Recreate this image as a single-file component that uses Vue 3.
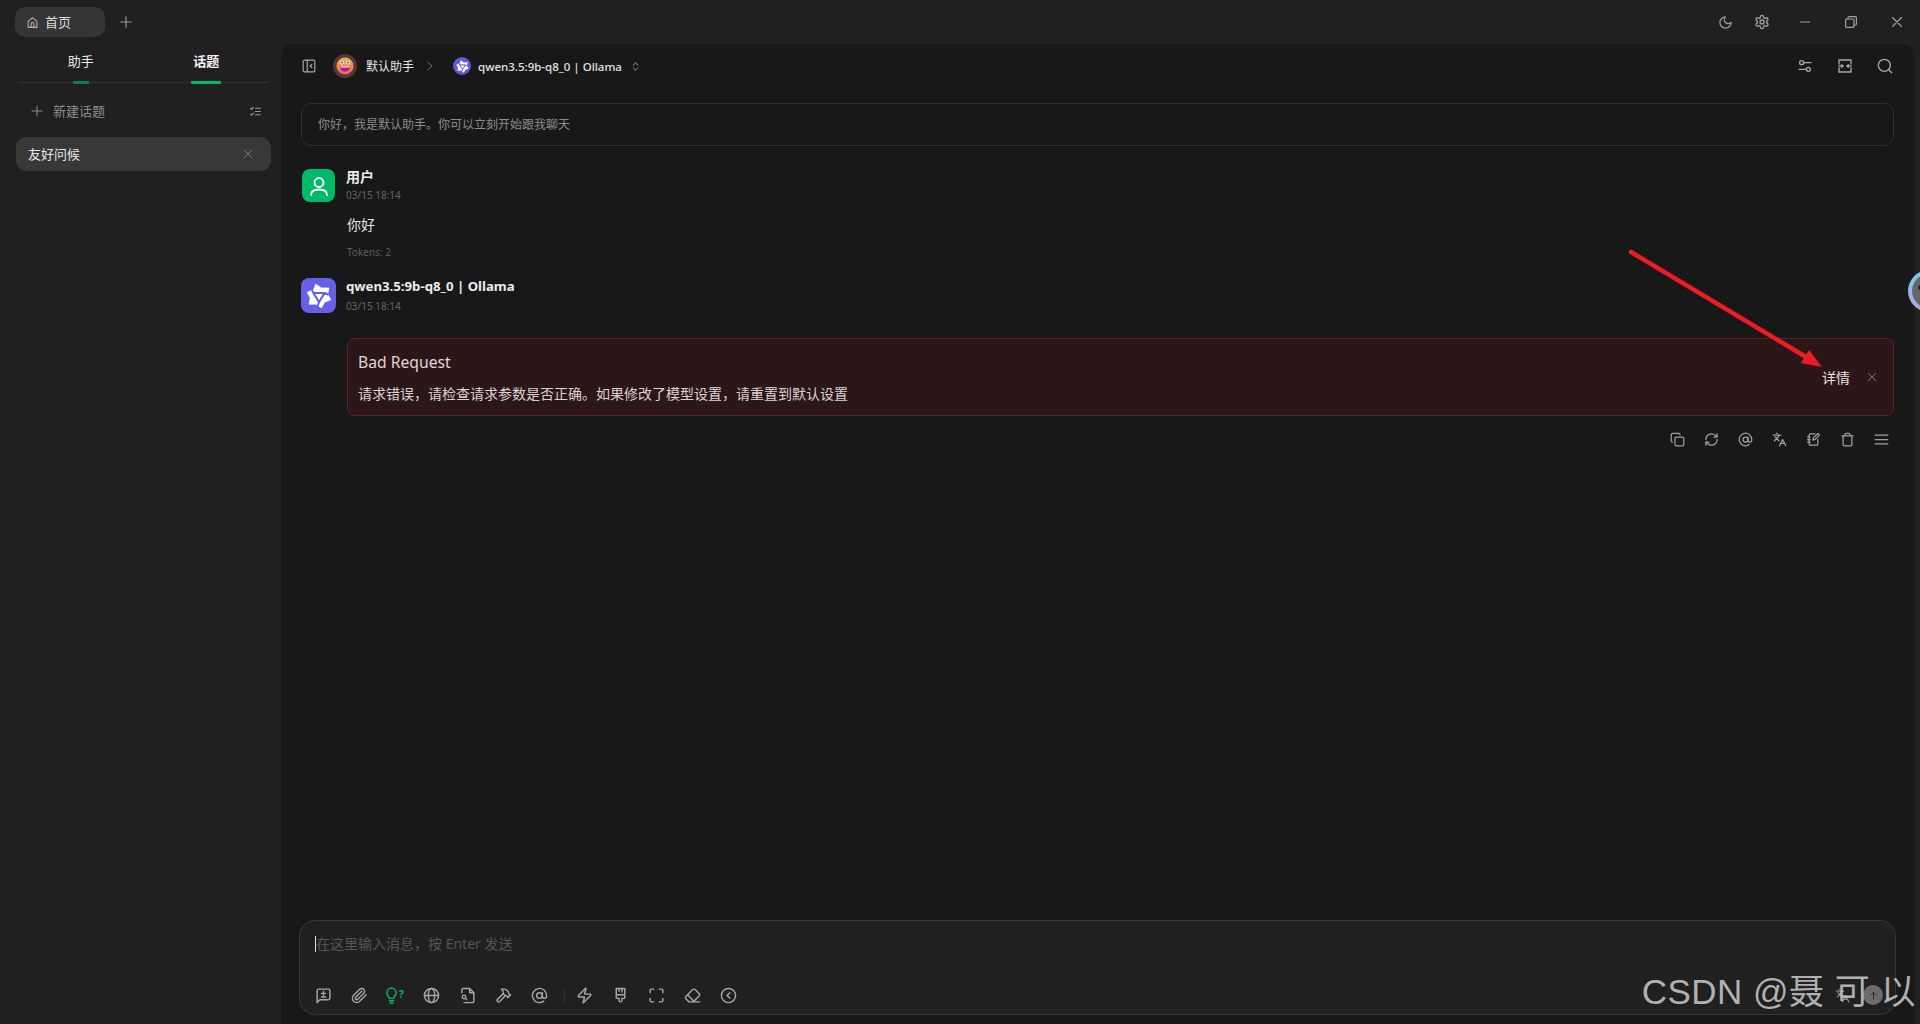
<template>
  <div class="app">
    <!-- 顶部标签栏 -->
    <header class="titlebar">
      <div class="tabs">
        <div class="tab">
          <svg class="home" viewBox="0 0 24 24"><path d="M4 21V10l8-7 8 7v11z" /><path d="M9.5 21v-7a2.5 2.5 0 0 1 5 0v7" /></svg>
          <span>首页</span>
        </div>
        <svg class="add" viewBox="0 0 24 24"><path d="M12 3v18M3 12h18" /></svg>
      </div>
      <div class="win">
        <svg class="moon" viewBox="0 0 24 24"><path d="M12 3a6 6 0 0 0 9 9 9 9 0 1 1-9-9Z" /></svg>
        <svg class="gear" viewBox="0 0 24 24"><path d="M12.22 2h-.44a2 2 0 0 0-2 2v.18a2 2 0 0 1-1 1.73l-.43.25a2 2 0 0 1-2 0l-.15-.08a2 2 0 0 0-2.73.73l-.22.38a2 2 0 0 0 .73 2.73l.15.1a2 2 0 0 1 1 1.72v.51a2 2 0 0 1-1 1.74l-.15.09a2 2 0 0 0-.73 2.73l.22.38a2 2 0 0 0 2.73.73l.15-.08a2 2 0 0 1 2 0l.43.25a2 2 0 0 1 1 1.73V20a2 2 0 0 0 2 2h.44a2 2 0 0 0 2-2v-.18a2 2 0 0 1 1-1.73l.43-.25a2 2 0 0 1 2 0l.15.08a2 2 0 0 0 2.73-.73l.22-.39a2 2 0 0 0-.73-2.73l-.15-.08a2 2 0 0 1-1-1.74v-.5a2 2 0 0 1 1-1.74l.15-.09a2 2 0 0 0 .73-2.73l-.22-.38a2 2 0 0 0-2.73-.73l-.15.08a2 2 0 0 1-2 0l-.43-.25a2 2 0 0 1-1-1.73V4a2 2 0 0 0-2-2z" /><circle cx="12" cy="12" r="3" /></svg>
        <svg class="min" viewBox="0 0 10 10"><path d="M0 5h10" /></svg>
        <svg class="max" viewBox="0 0 12 12"><rect x="0.6" y="3" width="8.4" height="8.4" rx="1" /><path d="M3 3V1.6a1 1 0 0 1 1-1h6.4a1 1 0 0 1 1 1V8a1 1 0 0 1-1 1H9" /></svg>
        <svg class="close" viewBox="0 0 10 10"><path d="M0.5 0.5l9 9M9.5 0.5l-9 9" /></svg>
      </div>
    </header>

    <div class="body">
      <!-- 左侧话题栏 -->
      <aside class="sidebar">
        <div class="side-tabs">
          <div class="side-tab">助手<i class="bar dim"></i></div>
          <div class="side-tab on">话题<i class="bar"></i></div>
        </div>
        <div class="new-topic">
          <svg class="plus" viewBox="0 0 24 24"><path d="M12 2v20M2 12h20" /></svg>
          <span>新建话题</span>
          <svg class="check" viewBox="0 0 24 24"><path d="M3 6l2 2 3-4M3 17l2 2 3-4M12 6h9M12 12h9M12 18h9" /></svg>
        </div>
        <div class="topic">
          <span>友好问候</span>
          <svg class="x" viewBox="0 0 24 24"><path d="M3 3l18 18M21 3L3 21" /></svg>
        </div>
      </aside>

      <!-- 主面板 -->
      <main class="panel">
        <div class="nav">
          <svg class="toggle" viewBox="0 0 24 24"><rect x="2" y="2" width="20" height="20" rx="2.5" /><path d="M9 2v20M17 9l-3 3 3 3" /></svg>
          <svg class="emoji" viewBox="0 0 24 24">
            <circle cx="12" cy="12" r="12" fill="#553733" stroke="none" />
            <circle cx="12" cy="12" r="8.5" fill="url(#face)" stroke="none" />
            <circle cx="9" cy="8.5" r="2" fill="#fff" stroke="none" />
            <circle cx="15" cy="8.5" r="2" fill="#fff" stroke="none" />
            <circle cx="9" cy="8.5" r="0.9" fill="#432" stroke="none" />
            <circle cx="15" cy="8.5" r="0.9" fill="#432" stroke="none" />
            <path d="M7 12.5h10c0 3-2 5-5 5s-5-2-5-5z" fill="#b5189c" stroke="none" />
            <path d="M7.5 12.5h9v1h-9z" fill="#fff" stroke="none" />
            <defs>
              <linearGradient id="face" x1="0" y1="0" x2="0" y2="1">
                <stop offset="0" stop-color="#f3b04a" />
                <stop offset="1" stop-color="#ea6a5c" />
              </linearGradient>
            </defs>
          </svg>
          <span class="crumb">默认助手</span>
          <svg class="chev" viewBox="0 0 24 24"><path d="M7 3l10 9-10 9" /></svg>
          <div class="mini-logo">
            <svg viewBox="0 0 24 24"><path class="star" :d="logoStar" /><path class="cut" :d="logoCut" /></svg>
          </div>
          <span class="crumb model">qwen3.5:9b-q8_0 | Ollama</span>
          <svg class="updown" viewBox="0 0 24 24"><path d="M7 9l5-5 5 5M7 15l5 5 5-5" /></svg>
          <div class="nav-right">
            <svg class="ico16" viewBox="0 0 24 24"><circle cx="7" cy="7" r="3" /><circle cx="17" cy="17" r="3" /><path d="M10 7h11M3 17h11" /></svg>
            <svg class="ico16" viewBox="0 0 24 24"><path d="M3 9V3h18v6M3 15v6h18v-6M3 12h6M21 12h-6" /><path d="M7 10l2 2-2 2M17 10l-2 2 2 2" /></svg>
            <svg class="ico16" viewBox="0 0 24 24"><circle cx="11" cy="11" r="9" /><path d="M18 18l4 4" /></svg>
          </div>
        </div>

        <div class="messages">
          <div class="greeting"><span>你好，我是默认助手。你可以立刻开始跟我聊天</span></div>

          <div class="msg user">
            <div class="msg-head">
              <div class="avatar green">
                <svg viewBox="0 0 24 24"><circle cx="12" cy="8.5" r="4.5" /><path d="M4 21c0-4 3.5-5.500 8-5.500s8 1.500 8 5.500" /></svg>
              </div>
              <div>
                <div class="name">用户</div>
                <div class="time">03/15 18:14</div>
              </div>
            </div>
            <div class="msg-body">
              <p class="text">你好</p>
              <div class="tokens">Tokens: 2</div>
            </div>
          </div>

          <div class="msg bot">
            <div class="msg-head">
              <div class="avatar purple">
                <svg viewBox="0 0 24 24"><path class="star" :d="logoStar" /><path class="cut" :d="logoCut" /></svg>
              </div>
              <div>
                <div class="name latin">qwen3.5:9b-q8_0 | Ollama</div>
                <div class="time">03/15 18:14</div>
              </div>
            </div>
            <div class="msg-body">
              <div class="alert">
                <div class="alert-text">
                  <div class="alert-title">Bad Request</div>
                  <div class="alert-desc">请求错误，请检查请求参数是否正确。如果修改了模型设置，请重置到默认设置</div>
                </div>
                <span class="detail">详情</span>
                <svg class="x" viewBox="0 0 24 24"><path d="M3 3l18 18M21 3L3 21" /></svg>
              </div>
              <div class="actions">
                <svg class="act" viewBox="0 0 24 24"><rect x="8" y="8" width="14" height="14" rx="2" /><path d="M4 16c-1.1 0-2-.9-2-2V4c0-1.1.9-2 2-2h10c1.1 0 2 .9 2 2" /></svg>
                <svg class="act" viewBox="0 0 24 24"><path d="M3 12a9 9 0 0 1 15-6.700L21 8M21 3v5h-5M21 12a9 9 0 0 1-15 6.700L3 16M3 21v-5h5" /></svg>
                <svg class="act" viewBox="0 0 24 24"><circle cx="12" cy="12" r="4" /><path d="M16 8v5a3 3 0 0 0 6 0v-1a10 10 0 1 0-4 8" /></svg>
                <svg class="act" viewBox="0 0 24 24"><path d="M5 8l6 6M4 14l6-6 2-3M2 5h12M7 2h1M22 22l-5-10-5 10M14 18h6" /></svg>
                <svg class="act" viewBox="0 0 24 24"><path d="M14 3H7a2 2 0 0 0-2 2v14a2 2 0 0 0 2 2h10a2 2 0 0 0 2-2v-7M2.5 8h4M2.5 12h4M2.5 16h4M11 13l1-4 7-6.500 2.500 2.500-7 7z" /></svg>
                <svg class="act" viewBox="0 0 24 24"><path d="M3 6h18M19 6v14c0 1-1 2-2 2H7c-1 0-2-1-2-2V6M8 6V4c0-1 1-2 2-2h4c1 0 2 1 2 2v2" /></svg>
                <svg class="act" viewBox="0 0 24 24"><path d="M2 5h20M2 12h20M2 19h20" /></svg>
              </div>
            </div>
          </div>
        </div>

        <!-- 输入框 -->
        <div class="composer">
          <div class="placeholder"><i class="caret"></i>在这里输入消息，按 Enter 发送</div>
          <div class="tools">
            <svg class="tool" viewBox="0 0 24 24"><path d="M3 22V5a2 2 0 0 1 2-2h14a2 2 0 0 1 2 2v11a2 2 0 0 1-2 2H7zM12 6v6M9 9h6M9 14h6" /></svg>
            <svg class="tool" viewBox="0 0 24 24"><path d="M21.44 11.05l-9.19 9.19a6 6 0 0 1-8.49-8.49l8.57-8.57A4 4 0 1 1 18 8.84l-8.59 8.57a2 2 0 0 1-2.83-2.83l8.49-8.48" /></svg>
            <div class="bulb">
              <svg class="tool" viewBox="0 0 24 24"><path d="M9 16c0-2-3.500-4-3.500-8a6.500 6.500 0 0 1 13 0c0 4-3.500 6-3.500 8zM9 19.500h6M10 22.500h4" /></svg>
              <span>?</span>
            </div>
            <svg class="tool" viewBox="0 0 24 24"><circle cx="12" cy="12" r="10" /><ellipse cx="12" cy="12" rx="4.5" ry="10" /><path d="M2 12h20" /></svg>
            <svg class="tool" viewBox="0 0 24 24"><path d="M4 8V4a2 2 0 0 1 2-2h9l6 6v12a2 2 0 0 1-2 2H7M15 2v6h6" /><circle cx="7" cy="14" r="2.5" /><path d="M9 16l2 2" /></svg>
            <svg class="tool" viewBox="0 0 24 24"><path d="M15 12l-8.400 8.400a2.100 2.100 0 0 1-3-3L12 9M18 15l4-4M21.5 11.500l-1.900-1.900A2 2 0 0 1 19 8.200V7l-2.300-2.300A6 6 0 0 0 12.500 3L9 3l.9.800A6.200 6.200 0 0 1 12 8.400V10l2 2h1.200a2 2 0 0 1 1.400.6l1.900 1.900" /></svg>
            <svg class="tool" viewBox="0 0 24 24"><circle cx="12" cy="12" r="4" /><path d="M16 8v5a3 3 0 0 0 6 0v-1a10 10 0 1 0-4 8" /></svg>
            <i class="sep"></i>
            <svg class="tool" viewBox="0 0 24 24"><path d="M4 14a1 1 0 0 1-.8-1.600l9.900-10.200a.5.5 0 0 1 .9.500l-1.900 6A1 1 0 0 0 13 10h7a1 1 0 0 1 .8 1.600l-9.900 10.200a.5.5 0 0 1-.9-.5l1.900-6A1 1 0 0 0 11 14z" /></svg>
            <svg class="tool" viewBox="0 0 24 24"><path d="M6 2h12v13a1 1 0 0 1-1 1h-3v3a2 2 0 0 1-4 0v-3H7a1 1 0 0 1-1-1zM6 11h12M10 2v4M14 2v5" /></svg>
            <svg class="tool" viewBox="0 0 24 24"><path d="M3 8V5a2 2 0 0 1 2-2h3M16 3h3a2 2 0 0 1 2 2v3M21 16v3a2 2 0 0 1-2 2h-3M8 21H5a2 2 0 0 1-2-2v-3" /></svg>
            <svg class="tool" viewBox="0 0 24 24"><path d="M7 21l-4.300-4.300c-1-1-1-2.500 0-3.400l9.600-9.600c1-1 2.500-1 3.400 0l5.600 5.600c1 1 1 2.500 0 3.400L13 21M22 21H7M5 11l9 9" /></svg>
            <svg class="tool" viewBox="0 0 24 24"><circle cx="12" cy="12" r="10" /><path d="M14 8l-4 4 4 4" /></svg>
          </div>
          <div class="send-group">
            <svg class="lang" viewBox="0 0 24 24"><path d="M5 8l6 6M4 14l6-6 2-3M2 5h12M7 2h1M22 22l-5-10-5 10M14 18h6" /></svg>
            <div class="send">
              <svg viewBox="0 0 24 24"><path d="M12 20V5M6 11l6-6 6 6" /></svg>
            </div>
          </div>
        </div>
      </main>
    </div>

    <!-- 截图批注与水印 -->
    <svg class="arrow" viewBox="0 0 210 140">
      <path d="M11 12L191 120" />
      <polygon points="202,127 181,123 189,110" />
    </svg>
    <div class="floater"><span><i></i></span></div>
    <div class="watermark">CSDN @聂 可 以</div>
  </div>
</template>

<script setup>
// 千问 logo：白色星形 + 挖空的倒三角和三条缝
const logoStar = 'M9.5 2.5L14 5.500h6l-1 5 2.500 4.500-5 2L14 21.500 9.500 18.500h-5.500l1-5L2.500 9l5-2z'
const logoCut = 'M7.500 9.500h9L12 17zM7.500 9.500L6 6.500M16.500 9.500l3 1.500M12 17l-1 3'
</script>

<style scoped>
.app {
  position: relative;
  width: 1920px;
  height: 1024px;
  overflow: hidden;
  background: #202020;
  color: #e6e6e6;
  font-family: "Noto Sans", "Noto Sans CJK SC", sans-serif;
  font-size: 13px;
}

svg {
  fill: none;
  stroke: currentColor;
  stroke-width: 2;
  stroke-linecap: round;
  stroke-linejoin: round;
  flex: none;
}

.ico16 { width: 16px; height: 16px; }

/* 顶部 */
.titlebar {
  height: 44px;
  display: flex;
  align-items: center;
  justify-content: space-between;
}

.tabs {
  display: flex;
  align-items: center;
  padding-left: 15px;
}

.tab {
  width: 90px;
  height: 30px;
  box-sizing: border-box;
  padding-left: 11px;
  border-radius: 10px;
  background: #353535;
  display: flex;
  align-items: center;
  gap: 6px;
  color: #ddd;
}

.tab span,
.new-topic span,
.topic span,
.greeting span {
  padding-bottom: 2px;
}

.home {
  width: 13px;
  height: 13px;
  color: #b5b5b5;
}

.add {
  width: 14px;
  height: 14px;
  margin-left: 14px;
  color: #999;
}

.win {
  display: flex;
  align-items: center;
  color: #a0a0a0;
  padding-right: 18px;
}

.moon { width: 15px; height: 15px; margin-right: 21px; }
.gear { width: 16px; height: 16px; margin-right: 30px; }
.min { width: 10px; height: 10px; margin-right: 35px; stroke-width: 1.2; }
.max { width: 12px; height: 12px; margin-right: 35px; stroke-width: 1.2; }
.close { width: 10px; height: 10px; stroke-width: 1.2; }

.body {
  display: flex;
  height: 980px;
}

/* 侧栏 */
.sidebar {
  width: 281px;
  flex: none;
  box-sizing: border-box;
  padding: 0 10px 0 16px;
}

.side-tabs {
  margin: 0 2px;
  height: 38px;
  display: grid;
  grid-template-columns: 1fr 1fr;
  border-bottom: 1px solid #333;
}

.side-tab {
  position: relative;
  text-align: center;
  line-height: 34px;
  color: #e8e8e8;
}

.side-tab.on {
  font-weight: 700;
  color: #f2f2f2;
}

.bar {
  position: absolute;
  left: 50%;
  bottom: -2px;
  width: 30px;
  height: 3px;
  border-radius: 1px;
  transform: translateX(-50%);
  background: #00b96b;
}

.bar.dim {
  width: 16px;
  background: #0f7d50;
}

.new-topic {
  height: 30px;
  margin-top: 13px;
  padding: 0 9px 0 15px;
  display: flex;
  align-items: center;
  gap: 10px;
  color: #8d8d8d;
}

.plus {
  width: 12px;
  height: 12px;
}

.check {
  width: 13px;
  height: 13px;
  margin-left: auto;
  color: #999;
}

.topic {
  height: 34px;
  margin-top: 11px;
  padding: 0 18px 0 12px;
  border-radius: 10px;
  background: #383838;
  display: flex;
  align-items: center;
  justify-content: space-between;
  color: #e6e6e6;
}

.x {
  width: 10px;
  height: 10px;
  color: #888;
}

/* 主面板 */
.panel {
  position: relative;
  width: 1633px;
  flex: none;
  background: #181818;
  border-radius: 12px 12px 0 0;
  display: flex;
  flex-direction: column;
}

.nav {
  height: 44px;
  display: flex;
  align-items: center;
  padding: 0 21px;
  color: #a8a8a8;
}

.toggle {
  width: 14px;
  height: 14px;
}

.emoji {
  width: 24px;
  height: 24px;
  margin-left: 17px;
}

.crumb {
  margin-left: 9px;
  font-size: 12px;
  color: #e4e4e4;
}

.chev {
  width: 10px;
  height: 10px;
  margin-left: 11px;
  color: #888;
}

.mini-logo {
  width: 18px;
  height: 18px;
  margin-left: 18px;
  border-radius: 50%;
  background: #5f57e0;
  display: flex;
  align-items: center;
  justify-content: center;
}

.mini-logo svg {
  width: 15px;
  height: 15px;
}

.star {
  fill: #fff;
  stroke: #fff;
  stroke-width: 0.5;
}

.cut {
  fill: none;
  stroke-width: 1.6;
  stroke-linecap: butt;
}

.mini-logo .cut { stroke: #5f57e0; }
.avatar.purple .cut { stroke: #6660e6; }

.crumb.model {
  margin-left: 7px;
  font-size: 11.5px;
  font-weight: 500;
}

.updown {
  width: 11px;
  height: 11px;
  margin-left: 8px;
}

.nav-right {
  margin-left: auto;
  display: flex;
  gap: 24px;
}

.messages {
  flex: 1;
  padding: 0 20px;
}

.greeting {
  margin-top: 15px;
  height: 43px;
  box-sizing: border-box;
  padding: 0 16px;
  display: flex;
  align-items: center;
  border: 1px solid #2f2f2f;
  border-radius: 10px;
  font-size: 12px;
  color: #8c8c8c;
}

.msg.user { margin-top: 23px; }
.msg.bot { margin-top: 19px; }

.msg-head {
  display: flex;
  gap: 10px;
  align-items: flex-start;
}

.avatar {
  border-radius: 8px;
  flex: none;
  display: flex;
  align-items: center;
  justify-content: center;
  color: #fff;
}

.avatar.green {
  width: 33px;
  height: 33px;
  margin: 0 1px;
  background: #00b96b;
}

.avatar.green svg {
  width: 24px;
  height: 24px;
  stroke-width: 1.8;
}

.avatar.purple {
  width: 35px;
  height: 35px;
  background: #6660e6;
}

.avatar.purple svg {
  width: 30px;
  height: 30px;
}

.name {
  font-size: 14px;
  font-weight: 700;
  line-height: 17px;
  color: #ececec;
}

.user .name { margin-top: -1px; }
.user .time { margin-top: 3px; }

.name.latin { font-size: 13.2px; }

.time {
  margin-top: 2px;
  font-size: 10px;
  line-height: 14px;
  color: #666;
}

.bot .time { margin-top: 4px; }

.msg-body { padding-left: 46px; }

.text {
  margin: 13px 0 0;
  font-size: 14px;
  line-height: 20px;
  color: #e4e4e4;
}

.tokens {
  margin-top: 10px;
  font-size: 10px;
  line-height: 14px;
  color: #5e5e5e;
}

.alert {
  margin-top: 25px;
  height: 78px;
  box-sizing: border-box;
  padding: 0 16px 0 10px;
  display: flex;
  align-items: center;
  background: #2d1618;
  border: 1px solid #58242a;
  border-radius: 8px;
}

.alert-text { flex: 1; }

.alert-title {
  font-size: 15.7px;
  line-height: 24px;
  color: #e0d6d6;
}

.alert-desc {
  margin-top: 10px;
  font-size: 14px;
  line-height: 20px;
  color: #ddd2d2;
}

.detail {
  font-size: 14px;
  color: #e8e0e0;
  margin-right: 17px;
}

.alert .x { color: #998888; }

.actions {
  margin-top: 16px;
  padding-right: 5px;
  display: flex;
  justify-content: flex-end;
  gap: 19px;
  color: #a0a0a0;
}

.act {
  width: 15px;
  height: 15px;
}

/* 输入框 */
.composer {
  position: relative;
  height: 95px;
  margin: 0 18px 9px;
  box-sizing: border-box;
  background: #202020;
  border: 1px solid #383838;
  border-radius: 16px;
}

.placeholder {
  margin: 14px 0 0 15px;
  display: flex;
  align-items: center;
  font-size: 14px;
  line-height: 18px;
  color: #555;
}

.caret {
  width: 1px;
  height: 16px;
  background: #ddd;
}

.tools {
  position: absolute;
  left: 15px;
  bottom: 10px;
  display: flex;
  align-items: center;
  gap: 19px;
  color: #a8a8a8;
}

.tool {
  width: 17px;
  height: 17px;
}

.bulb {
  position: relative;
  width: 17px;
  height: 17px;
  color: #00b96b;
}

.bulb .tool {
  margin-left: -4px;
}

.bulb span {
  position: absolute;
  left: 12px;
  top: -1px;
  font-size: 10px;
  line-height: 16px;
  font-weight: 700;
}

.sep {
  width: 1px;
  height: 14px;
  background: #333;
  margin: 0 -8px 0 -3px;
}

.send-group {
  position: absolute;
  right: 12px;
  bottom: 9px;
  display: flex;
  align-items: center;
  gap: 13px;
  color: #8c8c8c;
}

.lang {
  width: 15px;
  height: 15px;
}

.send {
  width: 20px;
  height: 20px;
  border-radius: 50%;
  background: #6c6c6c;
  color: #2a2a2a;
  display: flex;
  align-items: center;
  justify-content: center;
}

.send svg {
  width: 11px;
  height: 11px;
}

/* 红色箭头 */
.arrow {
  position: absolute;
  left: 1620px;
  top: 240px;
  width: 210px;
  height: 140px;
}

.arrow path {
  stroke: #ed1c24;
  stroke-width: 4.5;
}

.arrow polygon {
  fill: #ed1c24;
  stroke: none;
}

.floater {
  position: absolute;
  left: 1908px;
  top: 270px;
  width: 42px;
  height: 42px;
  border-radius: 50%;
  background: linear-gradient(#6fd0ea, #b9a4ea);
  display: flex;
  align-items: center;
  justify-content: center;
}

.floater span {
  position: relative;
  width: 34px;
  height: 34px;
  border-radius: 50%;
  background: #666;
}

.floater i {
  position: absolute;
  left: 6px;
  top: 11px;
  width: 5px;
  height: 5px;
  border-radius: 50%;
  background: #222;
}

.watermark {
  position: absolute;
  right: 4px;
  top: 972px;
  font-family: "Liberation Sans", "Noto Sans CJK SC", sans-serif;
  font-size: 35px;
  letter-spacing: 0.5px;
  line-height: 40px;
  color: rgba(205, 205, 205, 0.85);
  white-space: nowrap;
}
</style>

<style>
body { background: #202020; }
</style>
